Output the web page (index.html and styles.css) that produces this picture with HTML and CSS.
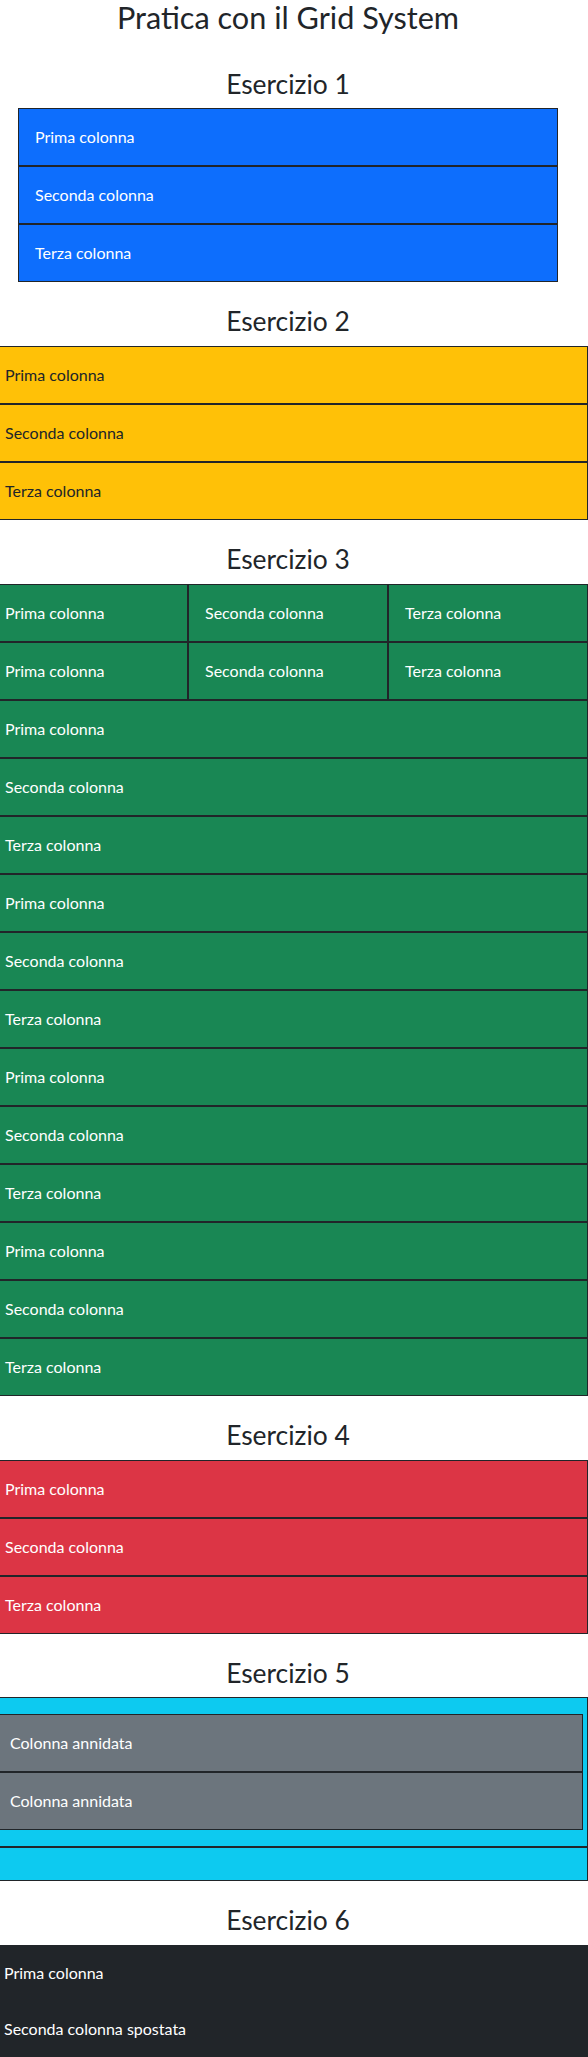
FILE: index.html
```html
<!DOCTYPE html>
<html lang="it">
<head>
<meta charset="utf-8">
<title>Pratica con il Grid System</title>
<link rel="stylesheet" href="styles.css">
</head>
<body>
<div class="page">
  <h1 class="title">Pratica con il Grid System</h1>

  <section class="exercise">
    <h2 class="exercise-title">Esercizio 1</h2>
    <div class="container">
      <div class="row">
        <div class="cell col-12 bg-primary">Prima colonna</div>
        <div class="cell col-12 bg-primary">Seconda colonna</div>
        <div class="cell col-12 bg-primary">Terza colonna</div>
      </div>
    </div>
  </section>

  <section class="exercise">
    <h2 class="exercise-title">Esercizio 2</h2>
    <div class="row">
      <div class="cell col-12 bg-warning">Prima colonna</div>
      <div class="cell col-12 bg-warning">Seconda colonna</div>
      <div class="cell col-12 bg-warning">Terza colonna</div>
    </div>
  </section>

  <section class="exercise">
    <h2 class="exercise-title">Esercizio 3</h2>
    <div class="row">
      <div class="cell col-4 bg-success">Prima colonna</div>
      <div class="cell col-4 bg-success">Seconda colonna</div>
      <div class="cell col-4 bg-success">Terza colonna</div>
    </div>
    <div class="row">
      <div class="cell col-4 bg-success">Prima colonna</div>
      <div class="cell col-4 bg-success">Seconda colonna</div>
      <div class="cell col-4 bg-success">Terza colonna</div>
    </div>
    <div class="row">
      <div class="cell col-12 bg-success">Prima colonna</div>
      <div class="cell col-12 bg-success">Seconda colonna</div>
      <div class="cell col-12 bg-success">Terza colonna</div>
    </div>
    <div class="row">
      <div class="cell col-12 bg-success">Prima colonna</div>
      <div class="cell col-12 bg-success">Seconda colonna</div>
      <div class="cell col-12 bg-success">Terza colonna</div>
    </div>
    <div class="row">
      <div class="cell col-12 bg-success">Prima colonna</div>
      <div class="cell col-12 bg-success">Seconda colonna</div>
      <div class="cell col-12 bg-success">Terza colonna</div>
    </div>
    <div class="row">
      <div class="cell col-12 bg-success">Prima colonna</div>
      <div class="cell col-12 bg-success">Seconda colonna</div>
      <div class="cell col-12 bg-success">Terza colonna</div>
    </div>
  </section>

  <section class="exercise">
    <h2 class="exercise-title">Esercizio 4</h2>
    <div class="row">
      <div class="cell col-12 bg-danger">Prima colonna</div>
      <div class="cell col-12 bg-danger">Seconda colonna</div>
      <div class="cell col-12 bg-danger">Terza colonna</div>
    </div>
  </section>

  <section class="exercise">
    <h2 class="exercise-title">Esercizio 5</h2>
    <div class="row">
      <div class="cell col-12 bg-info">
        <div class="row">
          <div class="cell col-12 bg-secondary">Colonna annidata</div>
          <div class="cell col-12 bg-secondary">Colonna annidata</div>
        </div>
      </div>
      <div class="cell col-12 bg-info"></div>
    </div>
  </section>

  <section class="exercise">
    <h2 class="exercise-title">Esercizio 6</h2>
    <div class="row">
      <div class="cell cell--plain col-12 bg-dark">Prima colonna</div>
      <div class="cell cell--plain col-12 bg-dark">Seconda colonna spostata</div>
    </div>
  </section>
</div>
</body>
</html>
```

FILE: styles.css
```css
* {
  box-sizing: border-box;
}

body {
  margin: 0;
  font-family: Lato, "Noto Sans", sans-serif;
  font-size: 16px;
  line-height: 1.5;
  color: #212529;
  background: #fff;
}

.page {
  width: 576px;
}

.title {
  margin: 0 0 8px;
  font-size: 30.64px;
  font-weight: 400;
  line-height: 1.2;
  text-align: center;
}

.exercise {
  padding-top: 24px;
}

.exercise-title {
  margin: 0 0 8px;
  font-size: 26.4px;
  font-weight: 400;
  line-height: 1.2;
  text-align: center;
}

.container {
  max-width: 540px;
  margin: 0 auto;
  padding: 0 12px;
}

.row {
  display: flex;
  flex-wrap: wrap;
  margin: 0 -12px;
}

.col-12 {
  flex: 0 0 100%;
}

.col-4 {
  flex: 0 0 33.333333%;
}

.cell {
  padding: 16px;
  border: 1px solid #212529;
}

.cell--plain {
  border: 0;
}

.bg-primary { background: #0d6efd; color: #fff; }
.bg-warning { background: #ffc107; color: #212529; }
.bg-success { background: #198754; color: #fff; }
.bg-danger { background: #dc3545; color: #fff; }
.bg-info { background: #0dcaf0; color: #212529; }
.bg-secondary { background: #6c757d; color: #fff; }
.bg-dark { background: #212529; color: #fff; }
```
